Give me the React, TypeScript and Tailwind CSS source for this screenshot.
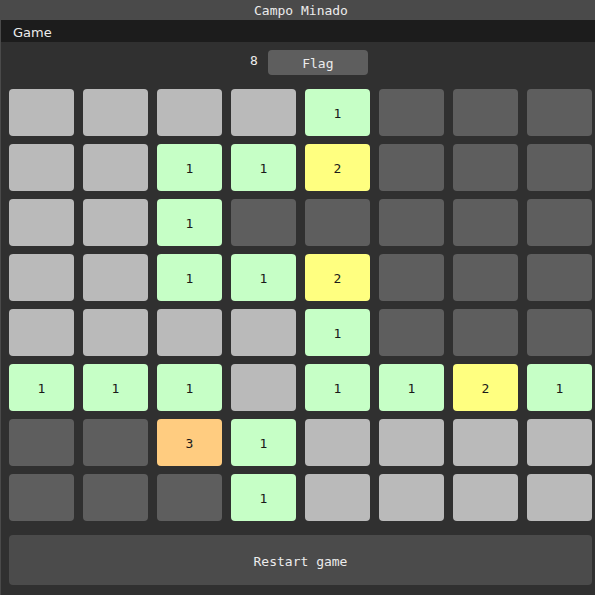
import React from "react";

type C = "g" | "d" | "1" | "2" | "3";
const board: C[][] = [
  ["g", "g", "g", "g", "1", "d", "d", "d"],
  ["g", "g", "1", "1", "2", "d", "d", "d"],
  ["g", "g", "1", "d", "d", "d", "d", "d"],
  ["g", "g", "1", "1", "2", "d", "d", "d"],
  ["g", "g", "g", "g", "1", "d", "d", "d"],
  ["1", "1", "1", "g", "1", "1", "2", "1"],
  ["d", "d", "3", "1", "g", "g", "g", "g"],
  ["d", "d", "d", "1", "g", "g", "g", "g"],
];

const bg: Record<C, string> = {
  g: "bg-[#bababa]",
  d: "bg-[#5e5e5e]",
  "1": "bg-[#c6ffc6]",
  "2": "bg-[#ffff80]",
  "3": "bg-[#ffcc80]",
};

function Cell({ c }: { c: C }) {
  return (
    <div
      className={`${bg[c]} h-[47px] w-[65px] rounded-[4px] flex items-center justify-center pt-[2px] text-[13px] text-[#1a1a1a] font-['DejaVu_Sans_Mono',monospace]`}
    >
      {c === "g" || c === "d" ? "" : c}
    </div>
  );
}

export default function App() {
  return (
    <div className="w-[595px] h-[595px] overflow-hidden bg-[#303030]">
      <div className="w-[601px] h-[595px] flex flex-col border-l border-[#4a4a4a] font-['DejaVu_Sans_Mono',monospace]">
        <div className="h-[20px] bg-[#4a4a4a] flex items-center justify-center pt-[1px] text-[13px] text-[#ececec]">
          Campo Minado
        </div>
        <div className="h-[22px] bg-[#1c1c1c] flex items-center pl-[12px] pt-[3px] text-[13px] text-[#ececec] font-['DejaVu_Sans',sans-serif]">
          Game
        </div>
        <div className="flex-1 bg-[#303030] pl-[8px] pt-[8px]">
          <div className="flex items-center h-[25px] pl-[241px] gap-[10px]">
            <span className="text-[13px] text-[#ececec] -mt-[4px]">8</span>
            <div className="w-[100px] h-[25px] rounded-[4px] bg-[#5e5e5e] flex items-center justify-center pt-[2px] text-[13px] text-[#ececec]">
              Flag
            </div>
          </div>
          <div className="mt-[14px] grid grid-cols-[repeat(8,65px)] gap-x-[9px] gap-y-[8px]">
            {board.flat().map((c, i) => (
              <Cell key={i} c={c} />
            ))}
          </div>
          <div className="mt-[14px] w-[583px] h-[50px] rounded-[4px] bg-[#4b4b4b] flex items-center justify-center pt-[3px] text-[13px] text-[#ececec]">
            Restart game
          </div>
        </div>
      </div>
    </div>
  );
}
